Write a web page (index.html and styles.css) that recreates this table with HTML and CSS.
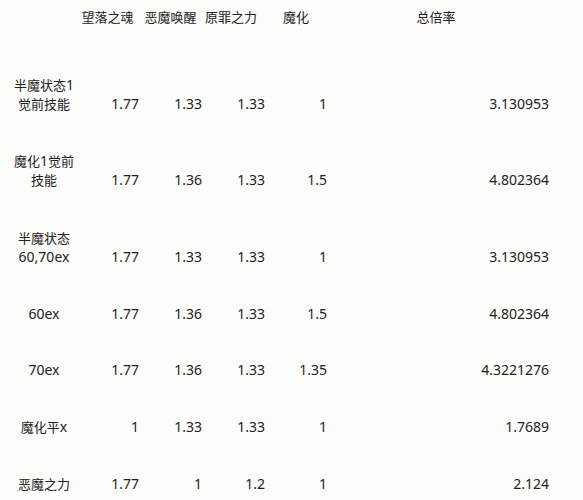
FILE: index.html
```html
<!DOCTYPE html>
<html lang="zh">
<head>
<meta charset="utf-8">
<title>倍率表</title>
<link rel="stylesheet" href="styles.css">
</head>
<body>
<table class="sheet">
  <colgroup>
    <col class="c-label"><col class="c-a"><col class="c-b"><col class="c-c"><col class="c-d"><col class="c-total">
  </colgroup>
  <thead>
    <tr class="row-head">
      <th></th>
      <th class="h-a"><span class="zh">望落之魂</span></th>
      <th class="h-b"><span class="zh">恶魔唤醒</span></th>
      <th class="h-c"><span class="zh">原罪之力</span></th>
      <th class="h-d"><span class="zh">魔化</span></th>
      <th class="h-total"><span class="zh">总倍率</span></th>
    </tr>
  </thead>
  <tbody>
    <tr class="row-tall">
      <td class="label"><div class="label-text"><span class="zh">半魔状态</span>1<br><span class="zh">觉前技能</span></div></td>
      <td class="num">1.77</td><td class="num">1.33</td><td class="num">1.33</td><td class="num">1</td><td class="num">3.130953</td>
    </tr>
    <tr class="row-tall">
      <td class="label"><div class="label-text"><span class="zh">魔化</span>1<span class="zh">觉前</span><br><span class="zh">技能</span></div></td>
      <td class="num">1.77</td><td class="num">1.36</td><td class="num">1.33</td><td class="num">1.5</td><td class="num">4.802364</td>
    </tr>
    <tr class="row-tall">
      <td class="label"><div class="label-text"><span class="zh">半魔状态</span><br>60,70ex</div></td>
      <td class="num">1.77</td><td class="num">1.33</td><td class="num">1.33</td><td class="num">1</td><td class="num">3.130953</td>
    </tr>
    <tr class="row-short">
      <td class="label"><div class="label-text">60ex</div></td>
      <td class="num">1.77</td><td class="num">1.36</td><td class="num">1.33</td><td class="num">1.5</td><td class="num">4.802364</td>
    </tr>
    <tr class="row-short">
      <td class="label"><div class="label-text">70ex</div></td>
      <td class="num">1.77</td><td class="num">1.36</td><td class="num">1.33</td><td class="num">1.35</td><td class="num">4.3221276</td>
    </tr>
    <tr class="row-short">
      <td class="label"><div class="label-text"><span class="zh">魔化平</span>x</div></td>
      <td class="num">1</td><td class="num">1.33</td><td class="num">1.33</td><td class="num">1</td><td class="num">1.7689</td>
    </tr>
    <tr class="row-short">
      <td class="label"><div class="label-text"><span class="zh">恶魔之力</span></div></td>
      <td class="num">1.77</td><td class="num">1</td><td class="num">1.2</td><td class="num">1</td><td class="num">2.124</td>
    </tr>
  </tbody>
</table>
</body>
</html>
```
FILE: styles.css
```css
html, body {
  margin: 0;
  padding: 0;
  background: #fcfcfa;
}
body {
  font-family: "Noto Sans", "Noto Sans CJK SC", sans-serif;
  font-size: 14px;
  color: #222222;
}
.zh {
  font-family: "Noto Sans CJK SC", sans-serif;
  font-size: 13px;
}
.sheet {
  border-collapse: collapse;
  table-layout: fixed;
  width: 549px;
}
.sheet th, .sheet td {
  padding: 0;
  line-height: 19px;
  white-space: nowrap;
}
.c-label { width: 78px; }
.c-a { width: 61px; }
.c-b { width: 63px; }
.c-c { width: 63px; }
.c-d { width: 62px; }
.c-total { width: 222px; }
.row-head { height: 36px; }
.row-head th {
  font-weight: normal;
  text-align: center;
  vertical-align: top;
  padding-top: 7px;
}
.row-head .h-a { padding-right: 2px; }
.row-head .h-c { padding-right: 5px; }
.row-head .h-total { padding-right: 4px; }
.row-tall { height: 76.7px; }
.row-short { height: 56.7px; }
.label {
  text-align: center;
  vertical-align: bottom;
}
.label-text {
  margin-left: 10px;
}
.num {
  text-align: right;
  vertical-align: bottom;
  padding-right: 3px;
}
```
